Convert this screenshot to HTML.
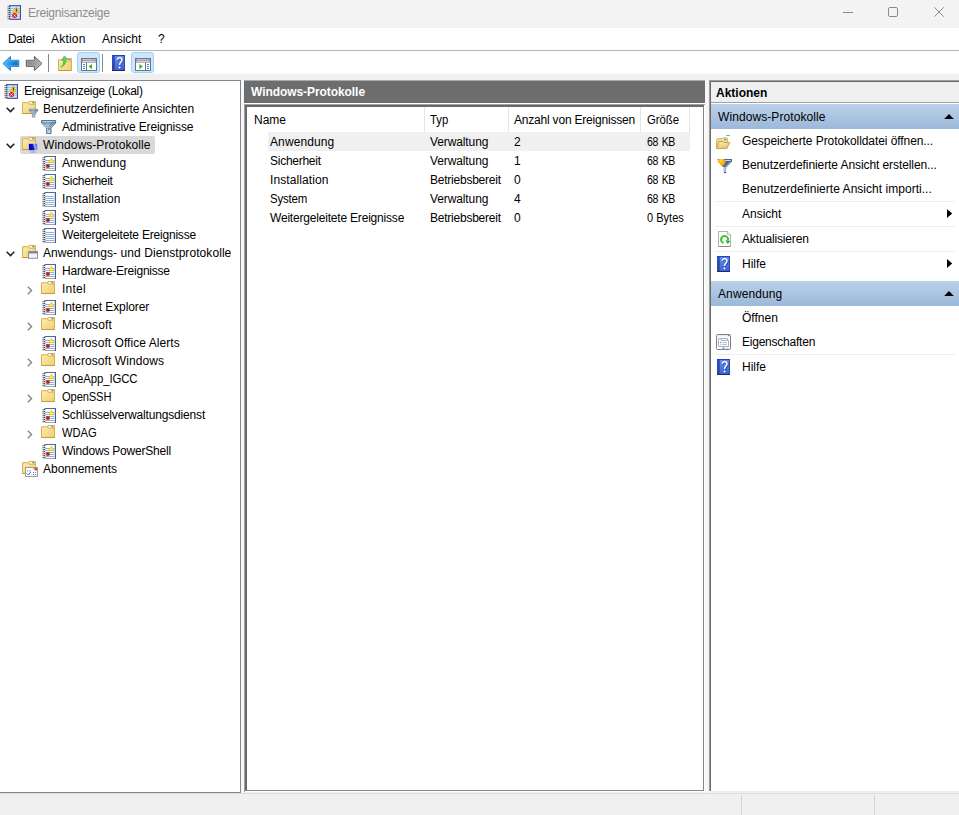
<!DOCTYPE html>
<html><head><meta charset="utf-8"><title>Ereignisanzeige</title>
<style>
*{box-sizing:border-box;margin:0;padding:0}
html,body{width:959px;height:815px;overflow:hidden;background:#f0f0f0}
body{font-family:"Liberation Sans",sans-serif;font-size:12px;color:#000;position:relative}
.abs{position:absolute}
svg{overflow:visible}
.t{position:absolute;white-space:nowrap;transform-origin:0 50%}
#title{left:0;top:0;width:959px;height:28px;background:#f3f3f3}
#menu{left:0;top:28px;width:959px;height:22px;background:#fff}
#mline{left:0;top:50px;width:959px;height:1px;background:#b4b4b4}
#tool{left:0;top:51px;width:959px;height:22px;background:#fff}
#tool2{left:0;top:73px;width:959px;height:1px;background:#f8f8f8}
#tree{left:0;top:80px;width:241px;height:713px;background:#fff;border-top:1px solid #828790;border-right:1px solid #828790;border-bottom:1px solid #828790}
#gap1{left:241px;top:80px;width:3px;height:713px;background:#f7f7f7}
#sel{left:20px;top:136px;width:135px;height:18px;background:#d9d9d9;border-radius:2px}
#midhead{left:244px;top:81px;width:461px;height:22px;background:#6d6d6d}
#midtop{left:244px;top:80px;width:461px;height:1px;background:#ababab}
#midw{left:244px;top:103px;width:461px;height:1px;background:#fff}
#midlist{left:244px;top:104px;width:461px;height:688px;background:#fff;border-left:1px solid #a0a0a0;border-top:1px solid #a0a0a0}
#midlist2{left:245px;top:105px;width:459px;height:686px;background:#fff;border-left:2px solid #696969;border-top:2px solid #696969;border-right:1px solid #828790;border-bottom:1px solid #828790}
#gap2{left:705px;top:80px;width:3px;height:713px;background:#f7f7f7}
#rowsel{left:268px;top:132px;width:422px;height:19px;background:#f0f0f0}
#right{left:709px;top:80px;width:250px;height:711px;background:#fff;border-left:1px solid #a0a0a0;border-top:1px solid #a0a0a0}
#right2{left:710px;top:81px;width:249px;height:710px;background:#fff;border-left:1px solid #696969;border-top:1px solid #696969}
#akt{left:711px;top:82px;width:248px;height:21px;background:#f0f0f0;border-bottom:1px solid #a0a0a0}
.bh{left:711px;width:248px;height:25px;background:linear-gradient(#bad1ea,#9cb8d9)}
.sep{left:716px;width:239px;height:1px;background:#ececec}
#rbot{left:709px;top:791px;width:250px;height:1px;background:#fff}
#rbot2{left:711px;top:791px;width:248px;height:1px;background:#ececec}
#status{left:0;top:793px;width:959px;height:22px;background:#f0f0f0;border-top:1px solid #dcdcdc}
.sdiv{top:795px;width:1px;height:20px;background:#d4d4d4}
.colsep{top:107px;width:1px;height:25px;background:#e5e5e5}
</style></head><body>
<div id="title" class="abs"></div>
<div id="menu" class="abs"></div>
<div id="mline" class="abs"></div>
<div id="tool" class="abs"></div><div id="tool2" class="abs"></div>
<div id="tree" class="abs"></div>
<div id="gap1" class="abs"></div>
<div id="sel" class="abs"></div>
<div id="midtop" class="abs"></div><div id="midhead" class="abs"></div>
<div id="midw" class="abs"></div>
<div id="midlist" class="abs"></div>
<div id="midlist2" class="abs"></div>
<div id="gap2" class="abs"></div>
<div id="rowsel" class="abs"></div>
<div class="abs colsep" style="left:424px"></div><div class="abs colsep" style="left:508px"></div><div class="abs colsep" style="left:640px"></div><div class="abs colsep" style="left:689px"></div>
<div id="right" class="abs"></div>
<div id="right2" class="abs"></div>
<div id="rbot" class="abs"></div><div id="rbot2" class="abs"></div>
<div id="akt" class="abs"></div>
<div class="abs bh" style="top:104px"></div>
<div class="abs bh" style="top:281px"></div>
<div class="abs sep" style="top:201px"></div><div class="abs sep" style="top:226px"></div><div class="abs sep" style="top:251px"></div><div class="abs sep" style="top:354px"></div>
<div id="status" class="abs"></div>
<div class="abs sdiv" style="left:741px"></div><div class="abs sdiv" style="left:874px"></div>
<svg class="abs" style="left:2px;top:55px" width="18" height="17" viewBox="0 0 18 17"><defs><linearGradient id="ba" x1="0" y1="0" x2="1" y2="0.35"><stop offset="0" stop-color="#4cc0fb"/><stop offset="0.45" stop-color="#2aa4f2"/><stop offset="1" stop-color="#0868cc"/></linearGradient></defs><path d="M8.5 1.4 L1 8.5 L8.5 15.5 L8.5 11.4 L16.8 11.4 L16.8 5.3 L8.5 5.3 Z" fill="url(#ba)" stroke="#2a80d2" stroke-width="1"/><path d="M7.6 3.8 L2.6 8.5 L7.6 13.2 L7.6 10.7 L15.8 10.7 L15.8 6 L7.6 6 Z" fill="none" stroke="#8fd6ff" stroke-width="0.5" opacity="0.8"/></svg><svg class="abs" style="left:25px;top:55px" width="18" height="17" viewBox="0 0 18 17"><defs><linearGradient id="fa" x1="0" y1="0" x2="1" y2="0.3"><stop offset="0" stop-color="#878787"/><stop offset="0.6" stop-color="#9a9a9a"/><stop offset="1" stop-color="#b4b4b4"/></linearGradient></defs><path d="M9.4 1.4 L17 8.5 L9.4 15.5 L9.4 11.4 L1.3 11.4 L1.3 5.3 L9.4 5.3 Z" fill="url(#fa)" stroke="#5e5e5e" stroke-width="1"/><path d="M10.3 3.8 L15.4 8.5 L10.3 13.2 L10.3 10.7 L2.3 10.7 L2.3 6 L10.3 6 Z" fill="none" stroke="#c4c4c4" stroke-width="0.5" opacity="0.7"/></svg><div class="abs" style="left:48px;top:54px;width:1px;height:18px;background:#8a8a8a"></div><svg class="abs" style="left:58px;top:55px" width="15" height="17" viewBox="0 0 15 17"><defs><linearGradient id="fg" x1="0" y1="0" x2="1" y2="1"><stop offset="0" stop-color="#fdeeb0"/><stop offset="1" stop-color="#f0cf70"/></linearGradient></defs><g transform="translate(0,3)"><path d="M0.5 1.7 L6.3 1.7 L6.9 0.5 L13.5 0.5 L13.5 12.5 L0.5 12.5 Z" fill="url(#fg)" stroke="#d8b052"/><path d="M6.3 1.7 L7.3 3.3 L13.2 3.3" fill="none" stroke="#d9b256" stroke-width="0.9"/><rect x="7.8" y="1" width="2.6" height="1.2" fill="#fff"/><rect x="10.4" y="1" width="1.8" height="1.2" fill="#3b8fe8"/><rect x="0.5" y="12" width="13" height="1" fill="#c49a3c"/></g><path d="M2.6 12.2 C5.2 10.4 6 7.6 5.6 5 L3.6 5.4 L6.4 1 L9.6 4.4 L7.8 4.6 C8.2 8 6.4 11 2.6 12.2 Z" fill="#55dc46" stroke="#2fae2a" stroke-width="0.6"/></svg><div class="abs" style="left:77px;top:52px;width:23px;height:21px;background:#cde6f9;border:1px solid #9ad3fb;border-radius:3px"></div><svg class="abs" style="left:81px;top:58px" width="16" height="13" viewBox="0 0 16 13"><rect x="0.5" y="0.5" width="15" height="12" fill="#fff" stroke="#6f7383"/><rect x="1" y="1" width="14" height="3.7" fill="#8f93a1"/><rect x="1.6" y="1.4" width="9.4" height="0.8" fill="#e4e7ee"/><rect x="11.7" y="1.3" width="1" height="1" fill="#e4e7ee"/><rect x="13.3" y="1.3" width="1" height="1" fill="#e4e7ee"/><rect x="1.6" y="3.1" width="12.8" height="0.8" fill="#e4e7ee"/><rect x="5" y="4.6" width="1" height="8" fill="#6f7383"/><rect x="2.2" y="6" width="1.8" height="1" fill="#2d7fd6"/><rect x="2.2" y="8" width="1.8" height="1" fill="#2d7fd6"/><rect x="2.2" y="10" width="1.8" height="1" fill="#2d7fd6"/><path d="M11 6 L11 11.2 L7.6 8.6 Z" fill="#35b233"/></svg><div class="abs" style="left:102px;top:54px;width:1px;height:18px;background:#8a8a8a"></div><svg class="abs" style="left:112px;top:55px" width="13" height="16" viewBox="0 0 13 16"><defs><linearGradient id="hp" x1="0" y1="0" x2="0.2" y2="1"><stop offset="0" stop-color="#6f90ec"/><stop offset="1" stop-color="#3d64d4"/></linearGradient><linearGradient id="hs" x1="0" y1="0" x2="0" y2="1"><stop offset="0" stop-color="#2450d0"/><stop offset="1" stop-color="#34468c"/></linearGradient></defs><rect x="0" y="0" width="13" height="16" fill="url(#hp)"/><rect x="0" y="0" width="2.8" height="16" fill="url(#hs)"/><rect x="0" y="0" width="13" height="1" fill="#1e40c4"/><rect x="12" y="0" width="1" height="16" fill="#2747bc"/><rect x="0" y="15" width="13" height="1" fill="#1b2a6c"/><path d="M5.3 4.7 C5.3 2.2 10 2.2 10 4.9 C10 6.9 7.6 7.3 7.6 10.1" fill="none" stroke="#2a3c86" stroke-width="1.5" transform="translate(0.7,0.6)"/><circle cx="8.2" cy="13" r="1" fill="#2a3c86"/><path d="M5.3 4.7 C5.3 2.2 10 2.2 10 4.9 C10 6.9 7.6 7.3 7.6 10.1" fill="none" stroke="#fff" stroke-width="1.5"/><circle cx="7.6" cy="12.5" r="1.05" fill="#fff"/></svg><div class="abs" style="left:131px;top:52px;width:23px;height:21px;background:#cde6f9;border:1px solid #9ad3fb;border-radius:3px"></div><svg class="abs" style="left:135px;top:58px" width="16" height="13" viewBox="0 0 16 13"><rect x="0.5" y="0.5" width="15" height="12" fill="#fff" stroke="#6f7383"/><rect x="1" y="1" width="14" height="3.7" fill="#8f93a1"/><rect x="1.6" y="1.4" width="9.4" height="0.8" fill="#e4e7ee"/><rect x="11.7" y="1.3" width="1" height="1" fill="#e4e7ee"/><rect x="13.3" y="1.3" width="1" height="1" fill="#e4e7ee"/><rect x="1.6" y="3.1" width="12.8" height="0.8" fill="#e4e7ee"/><rect x="10" y="4.6" width="1" height="8" fill="#6f7383"/><rect x="12" y="6" width="1.8" height="1" fill="#2d7fd6"/><rect x="12" y="8" width="1.8" height="1" fill="#2d7fd6"/><rect x="12" y="10" width="1.8" height="1" fill="#2d7fd6"/><path d="M4.4 6 L4.4 11.2 L7.8 8.6 Z" fill="#35b233"/></svg><svg class="abs" style="left:7px;top:5px" width="16" height="16" viewBox="0 0 16 16"><rect x="2.5" y="0.5" width="11" height="14" fill="#a9c1e6" stroke="#4d63a8"/><rect x="13" y="0" width="1" height="15" fill="#3f4fa0"/><rect x="2" y="14" width="12" height="1" fill="#4a5fa5"/><rect x="4" y="2" width="8.5" height="1" fill="#d9e5f4"/><rect x="4" y="4" width="8.5" height="1" fill="#d9e5f4"/><rect x="4" y="6" width="8.5" height="1" fill="#d9e5f4"/><rect x="4" y="8" width="8.5" height="1" fill="#d9e5f4"/><rect x="4" y="10" width="8.5" height="1" fill="#d9e5f4"/><rect x="4" y="12" width="8.5" height="1" fill="#d9e5f4"/><rect x="0.2" y="1" width="1.6" height="1" fill="#a6a6a6"/><rect x="1.6" y="1" width="1.7" height="1" fill="#4e4e4e"/><rect x="0.5" y="2" width="2.3" height="1" fill="#cfcfcf"/><rect x="0.2" y="3" width="1.6" height="1" fill="#a6a6a6"/><rect x="1.6" y="3" width="1.7" height="1" fill="#4e4e4e"/><rect x="0.5" y="4" width="2.3" height="1" fill="#cfcfcf"/><rect x="0.2" y="5" width="1.6" height="1" fill="#a6a6a6"/><rect x="1.6" y="5" width="1.7" height="1" fill="#4e4e4e"/><rect x="0.5" y="6" width="2.3" height="1" fill="#cfcfcf"/><rect x="0.2" y="7" width="1.6" height="1" fill="#a6a6a6"/><rect x="1.6" y="7" width="1.7" height="1" fill="#4e4e4e"/><rect x="0.5" y="8" width="2.3" height="1" fill="#cfcfcf"/><rect x="0.2" y="9" width="1.6" height="1" fill="#a6a6a6"/><rect x="1.6" y="9" width="1.7" height="1" fill="#4e4e4e"/><rect x="0.5" y="10" width="2.3" height="1" fill="#cfcfcf"/><rect x="0.2" y="11" width="1.6" height="1" fill="#a6a6a6"/><rect x="1.6" y="11" width="1.7" height="1" fill="#4e4e4e"/><rect x="0.5" y="12" width="2.3" height="1" fill="#cfcfcf"/><rect x="0.2" y="13" width="1.6" height="1" fill="#a6a6a6"/><rect x="1.6" y="13" width="1.7" height="1" fill="#4e4e4e"/><rect x="0.5" y="14" width="2.3" height="1" fill="#cfcfcf"/><path d="M9.3 2.1 L12.2 7.7 L6.4 7.7 Z" fill="#f7d916" stroke="#c9a800" stroke-width="0.6"/><rect x="8.9" y="3.6" width="0.9" height="2.4" fill="#222"/><rect x="8.9" y="6.4" width="0.9" height="0.8" fill="#222"/><circle cx="7.6" cy="10.6" r="2.5" fill="#d4202a"/><path d="M6.6 9.6 L8.6 11.6 M8.6 9.6 L6.6 11.6" stroke="#fff" stroke-width="0.9"/></svg><div class="abs" style="left:843px;top:12px;width:10px;height:1px;background:#8a8a8a"></div><svg class="abs" style="left:888px;top:7px" width="10" height="10" viewBox="0 0 10 10"><rect x="0.5" y="0.5" width="9" height="9" rx="1.4" fill="none" stroke="#8a8a8a"/></svg><svg class="abs" style="left:934px;top:7px" width="10" height="10" viewBox="0 0 10 10"><path d="M0.3 0.3 L9.7 9.7 M9.7 0.3 L0.3 9.7" stroke="#8a8a8a" stroke-width="1"/></svg>
<svg class="abs" style="left:4px;top:84px" width="16" height="16" viewBox="0 0 16 16"><rect x="2.5" y="0.5" width="11" height="14" fill="#a9c1e6" stroke="#4d63a8"/><rect x="13" y="0" width="1" height="15" fill="#3f4fa0"/><rect x="2" y="14" width="12" height="1" fill="#4a5fa5"/><rect x="4" y="2" width="8.5" height="1" fill="#d9e5f4"/><rect x="4" y="4" width="8.5" height="1" fill="#d9e5f4"/><rect x="4" y="6" width="8.5" height="1" fill="#d9e5f4"/><rect x="4" y="8" width="8.5" height="1" fill="#d9e5f4"/><rect x="4" y="10" width="8.5" height="1" fill="#d9e5f4"/><rect x="4" y="12" width="8.5" height="1" fill="#d9e5f4"/><rect x="0.2" y="1" width="1.6" height="1" fill="#a6a6a6"/><rect x="1.6" y="1" width="1.7" height="1" fill="#4e4e4e"/><rect x="0.5" y="2" width="2.3" height="1" fill="#cfcfcf"/><rect x="0.2" y="3" width="1.6" height="1" fill="#a6a6a6"/><rect x="1.6" y="3" width="1.7" height="1" fill="#4e4e4e"/><rect x="0.5" y="4" width="2.3" height="1" fill="#cfcfcf"/><rect x="0.2" y="5" width="1.6" height="1" fill="#a6a6a6"/><rect x="1.6" y="5" width="1.7" height="1" fill="#4e4e4e"/><rect x="0.5" y="6" width="2.3" height="1" fill="#cfcfcf"/><rect x="0.2" y="7" width="1.6" height="1" fill="#a6a6a6"/><rect x="1.6" y="7" width="1.7" height="1" fill="#4e4e4e"/><rect x="0.5" y="8" width="2.3" height="1" fill="#cfcfcf"/><rect x="0.2" y="9" width="1.6" height="1" fill="#a6a6a6"/><rect x="1.6" y="9" width="1.7" height="1" fill="#4e4e4e"/><rect x="0.5" y="10" width="2.3" height="1" fill="#cfcfcf"/><rect x="0.2" y="11" width="1.6" height="1" fill="#a6a6a6"/><rect x="1.6" y="11" width="1.7" height="1" fill="#4e4e4e"/><rect x="0.5" y="12" width="2.3" height="1" fill="#cfcfcf"/><rect x="0.2" y="13" width="1.6" height="1" fill="#a6a6a6"/><rect x="1.6" y="13" width="1.7" height="1" fill="#4e4e4e"/><rect x="0.5" y="14" width="2.3" height="1" fill="#cfcfcf"/><path d="M9.3 2.1 L12.2 7.7 L6.4 7.7 Z" fill="#f7d916" stroke="#c9a800" stroke-width="0.6"/><rect x="8.9" y="3.6" width="0.9" height="2.4" fill="#222"/><rect x="8.9" y="6.4" width="0.9" height="0.8" fill="#222"/><circle cx="7.6" cy="10.6" r="2.5" fill="#d4202a"/><path d="M6.6 9.6 L8.6 11.6 M8.6 9.6 L6.6 11.6" stroke="#fff" stroke-width="0.9"/></svg><svg class="abs" style="left:22px;top:101px" width="17" height="17" viewBox="0 0 17 17"><defs><linearGradient id="fg" x1="0" y1="0" x2="1" y2="1"><stop offset="0" stop-color="#fdeeb0"/><stop offset="1" stop-color="#f0cf70"/></linearGradient></defs><defs><linearGradient id="fu" x1="0" y1="0" x2="1" y2="0"><stop offset="0" stop-color="#7b9cb6"/><stop offset="0.45" stop-color="#a4bdd0"/><stop offset="1" stop-color="#53758f"/></linearGradient></defs><path d="M0.5 1.7 L6.3 1.7 L6.9 0.5 L13.5 0.5 L13.5 12.5 L0.5 12.5 Z" fill="url(#fg)" stroke="#d8b052"/><path d="M6.3 1.7 L7.3 3.3 L13.2 3.3" fill="none" stroke="#d9b256" stroke-width="0.9"/><rect x="7.8" y="1" width="2.6" height="1.2" fill="#fff"/><rect x="10.4" y="1" width="1.8" height="1.2" fill="#3b8fe8"/><rect x="0.5" y="12" width="13" height="1" fill="#c49a3c"/><g transform="translate(7,8) scale(0.6)"><path d="M0.5 0.5 L14.6 0.5 L14.6 3 L10 8 L10 13.6 L5.6 13.6 L5.6 8 L0.5 3 Z" fill="url(#fu)" stroke="#4d6e8a" stroke-width="0.9"/><rect x="1.4" y="1.3" width="12.4" height="0.9" fill="#b9dcf6"/><rect x="0.9" y="2.6" width="13.4" height="0.7" fill="#4f7697" opacity="0.85"/><path d="M1.8 3.6 L5.9 7.8" stroke="#dbe9f4" stroke-width="0.6" fill="none"/><path d="M13.3 3.6 L9.7 7.6" stroke="#eef5fb" stroke-width="0.7" stroke-dasharray="0.9 0.5" fill="none"/><rect x="6.6" y="8.4" width="2.5" height="4.4" fill="#d6e7f4"/><path d="M6.7 8.2 L7.85 11.4 L9 8.2 Z" fill="#5d83a4"/></g></svg><svg class="abs" style="left:6px;top:107px" width="9" height="6" viewBox="0 0 9 6"><path d="M0.7 0.8 L4.5 4.6 L8.3 0.8" fill="none" stroke="#1e1e1e" stroke-width="1.5"/></svg><svg class="abs" style="left:41px;top:120px" width="16" height="16" viewBox="0 0 16 16"><defs><linearGradient id="fu" x1="0" y1="0" x2="1" y2="0"><stop offset="0" stop-color="#7b9cb6"/><stop offset="0.45" stop-color="#a4bdd0"/><stop offset="1" stop-color="#53758f"/></linearGradient></defs><g transform="translate(0,0) scale(1.0)"><path d="M0.5 0.5 L14.6 0.5 L14.6 3 L10 8 L10 13.6 L5.6 13.6 L5.6 8 L0.5 3 Z" fill="url(#fu)" stroke="#4d6e8a" stroke-width="0.9"/><rect x="1.4" y="1.3" width="12.4" height="0.9" fill="#b9dcf6"/><rect x="0.9" y="2.6" width="13.4" height="0.7" fill="#4f7697" opacity="0.85"/><path d="M1.8 3.6 L5.9 7.8" stroke="#dbe9f4" stroke-width="0.6" fill="none"/><path d="M13.3 3.6 L9.7 7.6" stroke="#eef5fb" stroke-width="0.7" stroke-dasharray="0.9 0.5" fill="none"/><rect x="6.6" y="8.4" width="2.5" height="4.4" fill="#d6e7f4"/><path d="M6.7 8.2 L7.85 11.4 L9 8.2 Z" fill="#5d83a4"/></g></svg><svg class="abs" style="left:22px;top:137px" width="17" height="17" viewBox="0 0 17 17"><defs><linearGradient id="fg" x1="0" y1="0" x2="1" y2="1"><stop offset="0" stop-color="#fdeeb0"/><stop offset="1" stop-color="#f0cf70"/></linearGradient></defs><path d="M0.5 1.7 L6.3 1.7 L6.9 0.5 L13.5 0.5 L13.5 12.5 L0.5 12.5 Z" fill="url(#fg)" stroke="#d8b052"/><path d="M6.3 1.7 L7.3 3.3 L13.2 3.3" fill="none" stroke="#d9b256" stroke-width="0.9"/><rect x="7.8" y="1" width="2.6" height="1.2" fill="#fff"/><rect x="10.4" y="1" width="1.8" height="1.2" fill="#3b8fe8"/><rect x="0.5" y="12" width="13" height="1" fill="#c49a3c"/><defs><linearGradient id="mo" x1="0" y1="0.2" x2="1" y2="0"><stop offset="0" stop-color="#0606b8"/><stop offset="0.42" stop-color="#0c14c8"/><stop offset="0.62" stop-color="#9cb6f2"/><stop offset="1" stop-color="#2e56dc"/></linearGradient></defs><rect x="6.5" y="6.5" width="9" height="7" fill="url(#mo)" stroke="#c9c9d2" stroke-width="0.8"/><rect x="8.5" y="14.6" width="5" height="0.9" fill="#8b8b8b"/></svg><svg class="abs" style="left:6px;top:143px" width="9" height="6" viewBox="0 0 9 6"><path d="M0.7 0.8 L4.5 4.6 L8.3 0.8" fill="none" stroke="#1e1e1e" stroke-width="1.5"/></svg><svg class="abs" style="left:42px;top:156px" width="16" height="16" viewBox="0 0 16 16"><rect x="2.6" y="0" width="11.4" height="15" fill="#fff"/><rect x="2.4" y="0" width="11.6" height="1" fill="#5468b0"/><rect x="12" y="1" width="1" height="13" fill="#dcdcdc"/><rect x="13" y="0" width="1" height="15" fill="#4a5aa8"/><rect x="2.4" y="14" width="10.6" height="1" fill="#a3a3a3"/><rect x="3.4" y="4" width="8.6" height="1" fill="#8ab4da"/><rect x="3.4" y="6" width="8.6" height="1" fill="#8ab4da"/><rect x="3.4" y="8" width="8.6" height="1" fill="#8ab4da"/><rect x="3.4" y="10" width="8.6" height="1" fill="#8ab4da"/><rect x="3.4" y="12" width="8.6" height="1" fill="#8ab4da"/><rect x="0.2" y="1" width="1.6" height="1" fill="#a6a6a6"/><rect x="1.6" y="1" width="1.7" height="1" fill="#4e4e4e"/><rect x="0.5" y="2" width="2.3" height="1" fill="#cfcfcf"/><rect x="0.2" y="3" width="1.6" height="1" fill="#a6a6a6"/><rect x="1.6" y="3" width="1.7" height="1" fill="#4e4e4e"/><rect x="0.5" y="4" width="2.3" height="1" fill="#cfcfcf"/><rect x="0.2" y="5" width="1.6" height="1" fill="#a6a6a6"/><rect x="1.6" y="5" width="1.7" height="1" fill="#4e4e4e"/><rect x="0.5" y="6" width="2.3" height="1" fill="#cfcfcf"/><rect x="0.2" y="7" width="1.6" height="1" fill="#a6a6a6"/><rect x="1.6" y="7" width="1.7" height="1" fill="#4e4e4e"/><rect x="0.5" y="8" width="2.3" height="1" fill="#cfcfcf"/><rect x="0.2" y="9" width="1.6" height="1" fill="#a6a6a6"/><rect x="1.6" y="9" width="1.7" height="1" fill="#4e4e4e"/><rect x="0.5" y="10" width="2.3" height="1" fill="#cfcfcf"/><rect x="0.2" y="11" width="1.6" height="1" fill="#a6a6a6"/><rect x="1.6" y="11" width="1.7" height="1" fill="#4e4e4e"/><rect x="0.5" y="12" width="2.3" height="1" fill="#cfcfcf"/><rect x="0.2" y="13" width="1.6" height="1" fill="#a6a6a6"/><rect x="1.6" y="13" width="1.7" height="1" fill="#4e4e4e"/><rect x="0.5" y="14" width="2.3" height="1" fill="#cfcfcf"/><path d="M9.45 1.9 L12.1 6.8 L6.8 6.8 Z" fill="#fff038" stroke="#d6be1e" stroke-width="0.6"/><circle cx="5.9" cy="10" r="2" fill="#c81e1e"/></svg><svg class="abs" style="left:42px;top:174px" width="16" height="16" viewBox="0 0 16 16"><rect x="2.6" y="0" width="11.4" height="15" fill="#fff"/><rect x="2.4" y="0" width="11.6" height="1" fill="#5468b0"/><rect x="12" y="1" width="1" height="13" fill="#dcdcdc"/><rect x="13" y="0" width="1" height="15" fill="#4a5aa8"/><rect x="2.4" y="14" width="10.6" height="1" fill="#a3a3a3"/><rect x="3.4" y="4" width="8.6" height="1" fill="#8ab4da"/><rect x="3.4" y="6" width="8.6" height="1" fill="#8ab4da"/><rect x="3.4" y="8" width="8.6" height="1" fill="#8ab4da"/><rect x="3.4" y="10" width="8.6" height="1" fill="#8ab4da"/><rect x="3.4" y="12" width="8.6" height="1" fill="#8ab4da"/><rect x="0.2" y="1" width="1.6" height="1" fill="#a6a6a6"/><rect x="1.6" y="1" width="1.7" height="1" fill="#4e4e4e"/><rect x="0.5" y="2" width="2.3" height="1" fill="#cfcfcf"/><rect x="0.2" y="3" width="1.6" height="1" fill="#a6a6a6"/><rect x="1.6" y="3" width="1.7" height="1" fill="#4e4e4e"/><rect x="0.5" y="4" width="2.3" height="1" fill="#cfcfcf"/><rect x="0.2" y="5" width="1.6" height="1" fill="#a6a6a6"/><rect x="1.6" y="5" width="1.7" height="1" fill="#4e4e4e"/><rect x="0.5" y="6" width="2.3" height="1" fill="#cfcfcf"/><rect x="0.2" y="7" width="1.6" height="1" fill="#a6a6a6"/><rect x="1.6" y="7" width="1.7" height="1" fill="#4e4e4e"/><rect x="0.5" y="8" width="2.3" height="1" fill="#cfcfcf"/><rect x="0.2" y="9" width="1.6" height="1" fill="#a6a6a6"/><rect x="1.6" y="9" width="1.7" height="1" fill="#4e4e4e"/><rect x="0.5" y="10" width="2.3" height="1" fill="#cfcfcf"/><rect x="0.2" y="11" width="1.6" height="1" fill="#a6a6a6"/><rect x="1.6" y="11" width="1.7" height="1" fill="#4e4e4e"/><rect x="0.5" y="12" width="2.3" height="1" fill="#cfcfcf"/><rect x="0.2" y="13" width="1.6" height="1" fill="#a6a6a6"/><rect x="1.6" y="13" width="1.7" height="1" fill="#4e4e4e"/><rect x="0.5" y="14" width="2.3" height="1" fill="#cfcfcf"/><path d="M9.45 1.9 L12.1 6.8 L6.8 6.8 Z" fill="#fff038" stroke="#d6be1e" stroke-width="0.6"/><circle cx="5.9" cy="10" r="2" fill="#c81e1e"/></svg><svg class="abs" style="left:42px;top:192px" width="16" height="16" viewBox="0 0 16 16"><rect x="2.6" y="0" width="11.4" height="15" fill="#fff"/><rect x="2.4" y="0" width="11.6" height="1" fill="#5468b0"/><rect x="12" y="1" width="1" height="13" fill="#dcdcdc"/><rect x="13" y="0" width="1" height="15" fill="#4a5aa8"/><rect x="2.4" y="14" width="10.6" height="1" fill="#a3a3a3"/><rect x="3.4" y="4" width="8.6" height="1" fill="#8ab4da"/><rect x="3.4" y="6" width="8.6" height="1" fill="#8ab4da"/><rect x="3.4" y="8" width="8.6" height="1" fill="#8ab4da"/><rect x="3.4" y="10" width="8.6" height="1" fill="#8ab4da"/><rect x="3.4" y="12" width="8.6" height="1" fill="#8ab4da"/><rect x="0.2" y="1" width="1.6" height="1" fill="#a6a6a6"/><rect x="1.6" y="1" width="1.7" height="1" fill="#4e4e4e"/><rect x="0.5" y="2" width="2.3" height="1" fill="#cfcfcf"/><rect x="0.2" y="3" width="1.6" height="1" fill="#a6a6a6"/><rect x="1.6" y="3" width="1.7" height="1" fill="#4e4e4e"/><rect x="0.5" y="4" width="2.3" height="1" fill="#cfcfcf"/><rect x="0.2" y="5" width="1.6" height="1" fill="#a6a6a6"/><rect x="1.6" y="5" width="1.7" height="1" fill="#4e4e4e"/><rect x="0.5" y="6" width="2.3" height="1" fill="#cfcfcf"/><rect x="0.2" y="7" width="1.6" height="1" fill="#a6a6a6"/><rect x="1.6" y="7" width="1.7" height="1" fill="#4e4e4e"/><rect x="0.5" y="8" width="2.3" height="1" fill="#cfcfcf"/><rect x="0.2" y="9" width="1.6" height="1" fill="#a6a6a6"/><rect x="1.6" y="9" width="1.7" height="1" fill="#4e4e4e"/><rect x="0.5" y="10" width="2.3" height="1" fill="#cfcfcf"/><rect x="0.2" y="11" width="1.6" height="1" fill="#a6a6a6"/><rect x="1.6" y="11" width="1.7" height="1" fill="#4e4e4e"/><rect x="0.5" y="12" width="2.3" height="1" fill="#cfcfcf"/><rect x="0.2" y="13" width="1.6" height="1" fill="#a6a6a6"/><rect x="1.6" y="13" width="1.7" height="1" fill="#4e4e4e"/><rect x="0.5" y="14" width="2.3" height="1" fill="#cfcfcf"/></svg><svg class="abs" style="left:42px;top:210px" width="16" height="16" viewBox="0 0 16 16"><rect x="2.6" y="0" width="11.4" height="15" fill="#fff"/><rect x="2.4" y="0" width="11.6" height="1" fill="#5468b0"/><rect x="12" y="1" width="1" height="13" fill="#dcdcdc"/><rect x="13" y="0" width="1" height="15" fill="#4a5aa8"/><rect x="2.4" y="14" width="10.6" height="1" fill="#a3a3a3"/><rect x="3.4" y="4" width="8.6" height="1" fill="#8ab4da"/><rect x="3.4" y="6" width="8.6" height="1" fill="#8ab4da"/><rect x="3.4" y="8" width="8.6" height="1" fill="#8ab4da"/><rect x="3.4" y="10" width="8.6" height="1" fill="#8ab4da"/><rect x="3.4" y="12" width="8.6" height="1" fill="#8ab4da"/><rect x="0.2" y="1" width="1.6" height="1" fill="#a6a6a6"/><rect x="1.6" y="1" width="1.7" height="1" fill="#4e4e4e"/><rect x="0.5" y="2" width="2.3" height="1" fill="#cfcfcf"/><rect x="0.2" y="3" width="1.6" height="1" fill="#a6a6a6"/><rect x="1.6" y="3" width="1.7" height="1" fill="#4e4e4e"/><rect x="0.5" y="4" width="2.3" height="1" fill="#cfcfcf"/><rect x="0.2" y="5" width="1.6" height="1" fill="#a6a6a6"/><rect x="1.6" y="5" width="1.7" height="1" fill="#4e4e4e"/><rect x="0.5" y="6" width="2.3" height="1" fill="#cfcfcf"/><rect x="0.2" y="7" width="1.6" height="1" fill="#a6a6a6"/><rect x="1.6" y="7" width="1.7" height="1" fill="#4e4e4e"/><rect x="0.5" y="8" width="2.3" height="1" fill="#cfcfcf"/><rect x="0.2" y="9" width="1.6" height="1" fill="#a6a6a6"/><rect x="1.6" y="9" width="1.7" height="1" fill="#4e4e4e"/><rect x="0.5" y="10" width="2.3" height="1" fill="#cfcfcf"/><rect x="0.2" y="11" width="1.6" height="1" fill="#a6a6a6"/><rect x="1.6" y="11" width="1.7" height="1" fill="#4e4e4e"/><rect x="0.5" y="12" width="2.3" height="1" fill="#cfcfcf"/><rect x="0.2" y="13" width="1.6" height="1" fill="#a6a6a6"/><rect x="1.6" y="13" width="1.7" height="1" fill="#4e4e4e"/><rect x="0.5" y="14" width="2.3" height="1" fill="#cfcfcf"/><path d="M9.45 1.9 L12.1 6.8 L6.8 6.8 Z" fill="#fff038" stroke="#d6be1e" stroke-width="0.6"/><circle cx="5.9" cy="10" r="2" fill="#c81e1e"/></svg><svg class="abs" style="left:42px;top:228px" width="16" height="16" viewBox="0 0 16 16"><rect x="2.6" y="0" width="11.4" height="15" fill="#fff"/><rect x="2.4" y="0" width="11.6" height="1" fill="#5468b0"/><rect x="12" y="1" width="1" height="13" fill="#dcdcdc"/><rect x="13" y="0" width="1" height="15" fill="#4a5aa8"/><rect x="2.4" y="14" width="10.6" height="1" fill="#a3a3a3"/><rect x="3.4" y="4" width="8.6" height="1" fill="#8ab4da"/><rect x="3.4" y="6" width="8.6" height="1" fill="#8ab4da"/><rect x="3.4" y="8" width="8.6" height="1" fill="#8ab4da"/><rect x="3.4" y="10" width="8.6" height="1" fill="#8ab4da"/><rect x="3.4" y="12" width="8.6" height="1" fill="#8ab4da"/><rect x="0.2" y="1" width="1.6" height="1" fill="#a6a6a6"/><rect x="1.6" y="1" width="1.7" height="1" fill="#4e4e4e"/><rect x="0.5" y="2" width="2.3" height="1" fill="#cfcfcf"/><rect x="0.2" y="3" width="1.6" height="1" fill="#a6a6a6"/><rect x="1.6" y="3" width="1.7" height="1" fill="#4e4e4e"/><rect x="0.5" y="4" width="2.3" height="1" fill="#cfcfcf"/><rect x="0.2" y="5" width="1.6" height="1" fill="#a6a6a6"/><rect x="1.6" y="5" width="1.7" height="1" fill="#4e4e4e"/><rect x="0.5" y="6" width="2.3" height="1" fill="#cfcfcf"/><rect x="0.2" y="7" width="1.6" height="1" fill="#a6a6a6"/><rect x="1.6" y="7" width="1.7" height="1" fill="#4e4e4e"/><rect x="0.5" y="8" width="2.3" height="1" fill="#cfcfcf"/><rect x="0.2" y="9" width="1.6" height="1" fill="#a6a6a6"/><rect x="1.6" y="9" width="1.7" height="1" fill="#4e4e4e"/><rect x="0.5" y="10" width="2.3" height="1" fill="#cfcfcf"/><rect x="0.2" y="11" width="1.6" height="1" fill="#a6a6a6"/><rect x="1.6" y="11" width="1.7" height="1" fill="#4e4e4e"/><rect x="0.5" y="12" width="2.3" height="1" fill="#cfcfcf"/><rect x="0.2" y="13" width="1.6" height="1" fill="#a6a6a6"/><rect x="1.6" y="13" width="1.7" height="1" fill="#4e4e4e"/><rect x="0.5" y="14" width="2.3" height="1" fill="#cfcfcf"/></svg><svg class="abs" style="left:22px;top:245px" width="17" height="17" viewBox="0 0 17 17"><defs><linearGradient id="fg" x1="0" y1="0" x2="1" y2="1"><stop offset="0" stop-color="#fdeeb0"/><stop offset="1" stop-color="#f0cf70"/></linearGradient></defs><path d="M0.5 1.7 L6.3 1.7 L6.9 0.5 L13.5 0.5 L13.5 12.5 L0.5 12.5 Z" fill="url(#fg)" stroke="#d8b052"/><path d="M6.3 1.7 L7.3 3.3 L13.2 3.3" fill="none" stroke="#d9b256" stroke-width="0.9"/><rect x="7.8" y="1" width="2.6" height="1.2" fill="#fff"/><rect x="10.4" y="1" width="1.8" height="1.2" fill="#3b8fe8"/><rect x="0.5" y="12" width="13" height="1" fill="#c49a3c"/><rect x="6.5" y="6.5" width="9" height="6.8" fill="#f4f4f6" stroke="#8a8fa3"/><rect x="7" y="7" width="8" height="1.4" fill="#7e8394"/></svg><svg class="abs" style="left:6px;top:251px" width="9" height="6" viewBox="0 0 9 6"><path d="M0.7 0.8 L4.5 4.6 L8.3 0.8" fill="none" stroke="#1e1e1e" stroke-width="1.5"/></svg><svg class="abs" style="left:42px;top:264px" width="16" height="16" viewBox="0 0 16 16"><rect x="2.6" y="0" width="11.4" height="15" fill="#fff"/><rect x="2.4" y="0" width="11.6" height="1" fill="#5468b0"/><rect x="12" y="1" width="1" height="13" fill="#dcdcdc"/><rect x="13" y="0" width="1" height="15" fill="#4a5aa8"/><rect x="2.4" y="14" width="10.6" height="1" fill="#a3a3a3"/><rect x="3.4" y="4" width="8.6" height="1" fill="#8ab4da"/><rect x="3.4" y="6" width="8.6" height="1" fill="#8ab4da"/><rect x="3.4" y="8" width="8.6" height="1" fill="#8ab4da"/><rect x="3.4" y="10" width="8.6" height="1" fill="#8ab4da"/><rect x="3.4" y="12" width="8.6" height="1" fill="#8ab4da"/><rect x="0.2" y="1" width="1.6" height="1" fill="#a6a6a6"/><rect x="1.6" y="1" width="1.7" height="1" fill="#4e4e4e"/><rect x="0.5" y="2" width="2.3" height="1" fill="#cfcfcf"/><rect x="0.2" y="3" width="1.6" height="1" fill="#a6a6a6"/><rect x="1.6" y="3" width="1.7" height="1" fill="#4e4e4e"/><rect x="0.5" y="4" width="2.3" height="1" fill="#cfcfcf"/><rect x="0.2" y="5" width="1.6" height="1" fill="#a6a6a6"/><rect x="1.6" y="5" width="1.7" height="1" fill="#4e4e4e"/><rect x="0.5" y="6" width="2.3" height="1" fill="#cfcfcf"/><rect x="0.2" y="7" width="1.6" height="1" fill="#a6a6a6"/><rect x="1.6" y="7" width="1.7" height="1" fill="#4e4e4e"/><rect x="0.5" y="8" width="2.3" height="1" fill="#cfcfcf"/><rect x="0.2" y="9" width="1.6" height="1" fill="#a6a6a6"/><rect x="1.6" y="9" width="1.7" height="1" fill="#4e4e4e"/><rect x="0.5" y="10" width="2.3" height="1" fill="#cfcfcf"/><rect x="0.2" y="11" width="1.6" height="1" fill="#a6a6a6"/><rect x="1.6" y="11" width="1.7" height="1" fill="#4e4e4e"/><rect x="0.5" y="12" width="2.3" height="1" fill="#cfcfcf"/><rect x="0.2" y="13" width="1.6" height="1" fill="#a6a6a6"/><rect x="1.6" y="13" width="1.7" height="1" fill="#4e4e4e"/><rect x="0.5" y="14" width="2.3" height="1" fill="#cfcfcf"/><path d="M9.45 1.9 L12.1 6.8 L6.8 6.8 Z" fill="#fff038" stroke="#d6be1e" stroke-width="0.6"/><circle cx="5.9" cy="10" r="2" fill="#c81e1e"/></svg><svg class="abs" style="left:41px;top:281px" width="16" height="16" viewBox="0 0 16 16"><defs><linearGradient id="fg" x1="0" y1="0" x2="1" y2="1"><stop offset="0" stop-color="#fdeeb0"/><stop offset="1" stop-color="#f0cf70"/></linearGradient></defs><path d="M0.5 1.7 L6.3 1.7 L6.9 0.5 L13.5 0.5 L13.5 12.5 L0.5 12.5 Z" fill="url(#fg)" stroke="#d8b052"/><path d="M6.3 1.7 L7.3 3.3 L13.2 3.3" fill="none" stroke="#d9b256" stroke-width="0.9"/><rect x="7.8" y="1" width="2.6" height="1.2" fill="#fff"/><rect x="10.4" y="1" width="1.8" height="1.2" fill="#3b8fe8"/><rect x="0.5" y="12" width="13" height="1" fill="#c49a3c"/></svg><svg class="abs" style="left:27px;top:286px" width="6" height="9" viewBox="0 0 6 9"><path d="M0.8 0.7 L4.6 4.5 L0.8 8.3" fill="none" stroke="#858585" stroke-width="1.35"/></svg><svg class="abs" style="left:42px;top:300px" width="16" height="16" viewBox="0 0 16 16"><rect x="2.6" y="0" width="11.4" height="15" fill="#fff"/><rect x="2.4" y="0" width="11.6" height="1" fill="#5468b0"/><rect x="12" y="1" width="1" height="13" fill="#dcdcdc"/><rect x="13" y="0" width="1" height="15" fill="#4a5aa8"/><rect x="2.4" y="14" width="10.6" height="1" fill="#a3a3a3"/><rect x="3.4" y="4" width="8.6" height="1" fill="#8ab4da"/><rect x="3.4" y="6" width="8.6" height="1" fill="#8ab4da"/><rect x="3.4" y="8" width="8.6" height="1" fill="#8ab4da"/><rect x="3.4" y="10" width="8.6" height="1" fill="#8ab4da"/><rect x="3.4" y="12" width="8.6" height="1" fill="#8ab4da"/><rect x="0.2" y="1" width="1.6" height="1" fill="#a6a6a6"/><rect x="1.6" y="1" width="1.7" height="1" fill="#4e4e4e"/><rect x="0.5" y="2" width="2.3" height="1" fill="#cfcfcf"/><rect x="0.2" y="3" width="1.6" height="1" fill="#a6a6a6"/><rect x="1.6" y="3" width="1.7" height="1" fill="#4e4e4e"/><rect x="0.5" y="4" width="2.3" height="1" fill="#cfcfcf"/><rect x="0.2" y="5" width="1.6" height="1" fill="#a6a6a6"/><rect x="1.6" y="5" width="1.7" height="1" fill="#4e4e4e"/><rect x="0.5" y="6" width="2.3" height="1" fill="#cfcfcf"/><rect x="0.2" y="7" width="1.6" height="1" fill="#a6a6a6"/><rect x="1.6" y="7" width="1.7" height="1" fill="#4e4e4e"/><rect x="0.5" y="8" width="2.3" height="1" fill="#cfcfcf"/><rect x="0.2" y="9" width="1.6" height="1" fill="#a6a6a6"/><rect x="1.6" y="9" width="1.7" height="1" fill="#4e4e4e"/><rect x="0.5" y="10" width="2.3" height="1" fill="#cfcfcf"/><rect x="0.2" y="11" width="1.6" height="1" fill="#a6a6a6"/><rect x="1.6" y="11" width="1.7" height="1" fill="#4e4e4e"/><rect x="0.5" y="12" width="2.3" height="1" fill="#cfcfcf"/><rect x="0.2" y="13" width="1.6" height="1" fill="#a6a6a6"/><rect x="1.6" y="13" width="1.7" height="1" fill="#4e4e4e"/><rect x="0.5" y="14" width="2.3" height="1" fill="#cfcfcf"/><path d="M9.45 1.9 L12.1 6.8 L6.8 6.8 Z" fill="#fff038" stroke="#d6be1e" stroke-width="0.6"/><circle cx="5.9" cy="10" r="2" fill="#c81e1e"/></svg><svg class="abs" style="left:41px;top:317px" width="16" height="16" viewBox="0 0 16 16"><defs><linearGradient id="fg" x1="0" y1="0" x2="1" y2="1"><stop offset="0" stop-color="#fdeeb0"/><stop offset="1" stop-color="#f0cf70"/></linearGradient></defs><path d="M0.5 1.7 L6.3 1.7 L6.9 0.5 L13.5 0.5 L13.5 12.5 L0.5 12.5 Z" fill="url(#fg)" stroke="#d8b052"/><path d="M6.3 1.7 L7.3 3.3 L13.2 3.3" fill="none" stroke="#d9b256" stroke-width="0.9"/><rect x="7.8" y="1" width="2.6" height="1.2" fill="#fff"/><rect x="10.4" y="1" width="1.8" height="1.2" fill="#3b8fe8"/><rect x="0.5" y="12" width="13" height="1" fill="#c49a3c"/></svg><svg class="abs" style="left:27px;top:322px" width="6" height="9" viewBox="0 0 6 9"><path d="M0.8 0.7 L4.6 4.5 L0.8 8.3" fill="none" stroke="#858585" stroke-width="1.35"/></svg><svg class="abs" style="left:42px;top:336px" width="16" height="16" viewBox="0 0 16 16"><rect x="2.6" y="0" width="11.4" height="15" fill="#fff"/><rect x="2.4" y="0" width="11.6" height="1" fill="#5468b0"/><rect x="12" y="1" width="1" height="13" fill="#dcdcdc"/><rect x="13" y="0" width="1" height="15" fill="#4a5aa8"/><rect x="2.4" y="14" width="10.6" height="1" fill="#a3a3a3"/><rect x="3.4" y="4" width="8.6" height="1" fill="#8ab4da"/><rect x="3.4" y="6" width="8.6" height="1" fill="#8ab4da"/><rect x="3.4" y="8" width="8.6" height="1" fill="#8ab4da"/><rect x="3.4" y="10" width="8.6" height="1" fill="#8ab4da"/><rect x="3.4" y="12" width="8.6" height="1" fill="#8ab4da"/><rect x="0.2" y="1" width="1.6" height="1" fill="#a6a6a6"/><rect x="1.6" y="1" width="1.7" height="1" fill="#4e4e4e"/><rect x="0.5" y="2" width="2.3" height="1" fill="#cfcfcf"/><rect x="0.2" y="3" width="1.6" height="1" fill="#a6a6a6"/><rect x="1.6" y="3" width="1.7" height="1" fill="#4e4e4e"/><rect x="0.5" y="4" width="2.3" height="1" fill="#cfcfcf"/><rect x="0.2" y="5" width="1.6" height="1" fill="#a6a6a6"/><rect x="1.6" y="5" width="1.7" height="1" fill="#4e4e4e"/><rect x="0.5" y="6" width="2.3" height="1" fill="#cfcfcf"/><rect x="0.2" y="7" width="1.6" height="1" fill="#a6a6a6"/><rect x="1.6" y="7" width="1.7" height="1" fill="#4e4e4e"/><rect x="0.5" y="8" width="2.3" height="1" fill="#cfcfcf"/><rect x="0.2" y="9" width="1.6" height="1" fill="#a6a6a6"/><rect x="1.6" y="9" width="1.7" height="1" fill="#4e4e4e"/><rect x="0.5" y="10" width="2.3" height="1" fill="#cfcfcf"/><rect x="0.2" y="11" width="1.6" height="1" fill="#a6a6a6"/><rect x="1.6" y="11" width="1.7" height="1" fill="#4e4e4e"/><rect x="0.5" y="12" width="2.3" height="1" fill="#cfcfcf"/><rect x="0.2" y="13" width="1.6" height="1" fill="#a6a6a6"/><rect x="1.6" y="13" width="1.7" height="1" fill="#4e4e4e"/><rect x="0.5" y="14" width="2.3" height="1" fill="#cfcfcf"/><path d="M9.45 1.9 L12.1 6.8 L6.8 6.8 Z" fill="#fff038" stroke="#d6be1e" stroke-width="0.6"/><circle cx="5.9" cy="10" r="2" fill="#c81e1e"/></svg><svg class="abs" style="left:41px;top:353px" width="16" height="16" viewBox="0 0 16 16"><defs><linearGradient id="fg" x1="0" y1="0" x2="1" y2="1"><stop offset="0" stop-color="#fdeeb0"/><stop offset="1" stop-color="#f0cf70"/></linearGradient></defs><path d="M0.5 1.7 L6.3 1.7 L6.9 0.5 L13.5 0.5 L13.5 12.5 L0.5 12.5 Z" fill="url(#fg)" stroke="#d8b052"/><path d="M6.3 1.7 L7.3 3.3 L13.2 3.3" fill="none" stroke="#d9b256" stroke-width="0.9"/><rect x="7.8" y="1" width="2.6" height="1.2" fill="#fff"/><rect x="10.4" y="1" width="1.8" height="1.2" fill="#3b8fe8"/><rect x="0.5" y="12" width="13" height="1" fill="#c49a3c"/></svg><svg class="abs" style="left:27px;top:358px" width="6" height="9" viewBox="0 0 6 9"><path d="M0.8 0.7 L4.6 4.5 L0.8 8.3" fill="none" stroke="#858585" stroke-width="1.35"/></svg><svg class="abs" style="left:42px;top:372px" width="16" height="16" viewBox="0 0 16 16"><rect x="2.6" y="0" width="11.4" height="15" fill="#fff"/><rect x="2.4" y="0" width="11.6" height="1" fill="#5468b0"/><rect x="12" y="1" width="1" height="13" fill="#dcdcdc"/><rect x="13" y="0" width="1" height="15" fill="#4a5aa8"/><rect x="2.4" y="14" width="10.6" height="1" fill="#a3a3a3"/><rect x="3.4" y="4" width="8.6" height="1" fill="#8ab4da"/><rect x="3.4" y="6" width="8.6" height="1" fill="#8ab4da"/><rect x="3.4" y="8" width="8.6" height="1" fill="#8ab4da"/><rect x="3.4" y="10" width="8.6" height="1" fill="#8ab4da"/><rect x="3.4" y="12" width="8.6" height="1" fill="#8ab4da"/><rect x="0.2" y="1" width="1.6" height="1" fill="#a6a6a6"/><rect x="1.6" y="1" width="1.7" height="1" fill="#4e4e4e"/><rect x="0.5" y="2" width="2.3" height="1" fill="#cfcfcf"/><rect x="0.2" y="3" width="1.6" height="1" fill="#a6a6a6"/><rect x="1.6" y="3" width="1.7" height="1" fill="#4e4e4e"/><rect x="0.5" y="4" width="2.3" height="1" fill="#cfcfcf"/><rect x="0.2" y="5" width="1.6" height="1" fill="#a6a6a6"/><rect x="1.6" y="5" width="1.7" height="1" fill="#4e4e4e"/><rect x="0.5" y="6" width="2.3" height="1" fill="#cfcfcf"/><rect x="0.2" y="7" width="1.6" height="1" fill="#a6a6a6"/><rect x="1.6" y="7" width="1.7" height="1" fill="#4e4e4e"/><rect x="0.5" y="8" width="2.3" height="1" fill="#cfcfcf"/><rect x="0.2" y="9" width="1.6" height="1" fill="#a6a6a6"/><rect x="1.6" y="9" width="1.7" height="1" fill="#4e4e4e"/><rect x="0.5" y="10" width="2.3" height="1" fill="#cfcfcf"/><rect x="0.2" y="11" width="1.6" height="1" fill="#a6a6a6"/><rect x="1.6" y="11" width="1.7" height="1" fill="#4e4e4e"/><rect x="0.5" y="12" width="2.3" height="1" fill="#cfcfcf"/><rect x="0.2" y="13" width="1.6" height="1" fill="#a6a6a6"/><rect x="1.6" y="13" width="1.7" height="1" fill="#4e4e4e"/><rect x="0.5" y="14" width="2.3" height="1" fill="#cfcfcf"/><path d="M9.45 1.9 L12.1 6.8 L6.8 6.8 Z" fill="#fff038" stroke="#d6be1e" stroke-width="0.6"/><circle cx="5.9" cy="10" r="2" fill="#c81e1e"/></svg><svg class="abs" style="left:41px;top:389px" width="16" height="16" viewBox="0 0 16 16"><defs><linearGradient id="fg" x1="0" y1="0" x2="1" y2="1"><stop offset="0" stop-color="#fdeeb0"/><stop offset="1" stop-color="#f0cf70"/></linearGradient></defs><path d="M0.5 1.7 L6.3 1.7 L6.9 0.5 L13.5 0.5 L13.5 12.5 L0.5 12.5 Z" fill="url(#fg)" stroke="#d8b052"/><path d="M6.3 1.7 L7.3 3.3 L13.2 3.3" fill="none" stroke="#d9b256" stroke-width="0.9"/><rect x="7.8" y="1" width="2.6" height="1.2" fill="#fff"/><rect x="10.4" y="1" width="1.8" height="1.2" fill="#3b8fe8"/><rect x="0.5" y="12" width="13" height="1" fill="#c49a3c"/></svg><svg class="abs" style="left:27px;top:394px" width="6" height="9" viewBox="0 0 6 9"><path d="M0.8 0.7 L4.6 4.5 L0.8 8.3" fill="none" stroke="#858585" stroke-width="1.35"/></svg><svg class="abs" style="left:42px;top:408px" width="16" height="16" viewBox="0 0 16 16"><rect x="2.6" y="0" width="11.4" height="15" fill="#fff"/><rect x="2.4" y="0" width="11.6" height="1" fill="#5468b0"/><rect x="12" y="1" width="1" height="13" fill="#dcdcdc"/><rect x="13" y="0" width="1" height="15" fill="#4a5aa8"/><rect x="2.4" y="14" width="10.6" height="1" fill="#a3a3a3"/><rect x="3.4" y="4" width="8.6" height="1" fill="#8ab4da"/><rect x="3.4" y="6" width="8.6" height="1" fill="#8ab4da"/><rect x="3.4" y="8" width="8.6" height="1" fill="#8ab4da"/><rect x="3.4" y="10" width="8.6" height="1" fill="#8ab4da"/><rect x="3.4" y="12" width="8.6" height="1" fill="#8ab4da"/><rect x="0.2" y="1" width="1.6" height="1" fill="#a6a6a6"/><rect x="1.6" y="1" width="1.7" height="1" fill="#4e4e4e"/><rect x="0.5" y="2" width="2.3" height="1" fill="#cfcfcf"/><rect x="0.2" y="3" width="1.6" height="1" fill="#a6a6a6"/><rect x="1.6" y="3" width="1.7" height="1" fill="#4e4e4e"/><rect x="0.5" y="4" width="2.3" height="1" fill="#cfcfcf"/><rect x="0.2" y="5" width="1.6" height="1" fill="#a6a6a6"/><rect x="1.6" y="5" width="1.7" height="1" fill="#4e4e4e"/><rect x="0.5" y="6" width="2.3" height="1" fill="#cfcfcf"/><rect x="0.2" y="7" width="1.6" height="1" fill="#a6a6a6"/><rect x="1.6" y="7" width="1.7" height="1" fill="#4e4e4e"/><rect x="0.5" y="8" width="2.3" height="1" fill="#cfcfcf"/><rect x="0.2" y="9" width="1.6" height="1" fill="#a6a6a6"/><rect x="1.6" y="9" width="1.7" height="1" fill="#4e4e4e"/><rect x="0.5" y="10" width="2.3" height="1" fill="#cfcfcf"/><rect x="0.2" y="11" width="1.6" height="1" fill="#a6a6a6"/><rect x="1.6" y="11" width="1.7" height="1" fill="#4e4e4e"/><rect x="0.5" y="12" width="2.3" height="1" fill="#cfcfcf"/><rect x="0.2" y="13" width="1.6" height="1" fill="#a6a6a6"/><rect x="1.6" y="13" width="1.7" height="1" fill="#4e4e4e"/><rect x="0.5" y="14" width="2.3" height="1" fill="#cfcfcf"/><path d="M9.45 1.9 L12.1 6.8 L6.8 6.8 Z" fill="#fff038" stroke="#d6be1e" stroke-width="0.6"/><circle cx="5.9" cy="10" r="2" fill="#c81e1e"/></svg><svg class="abs" style="left:41px;top:425px" width="16" height="16" viewBox="0 0 16 16"><defs><linearGradient id="fg" x1="0" y1="0" x2="1" y2="1"><stop offset="0" stop-color="#fdeeb0"/><stop offset="1" stop-color="#f0cf70"/></linearGradient></defs><path d="M0.5 1.7 L6.3 1.7 L6.9 0.5 L13.5 0.5 L13.5 12.5 L0.5 12.5 Z" fill="url(#fg)" stroke="#d8b052"/><path d="M6.3 1.7 L7.3 3.3 L13.2 3.3" fill="none" stroke="#d9b256" stroke-width="0.9"/><rect x="7.8" y="1" width="2.6" height="1.2" fill="#fff"/><rect x="10.4" y="1" width="1.8" height="1.2" fill="#3b8fe8"/><rect x="0.5" y="12" width="13" height="1" fill="#c49a3c"/></svg><svg class="abs" style="left:27px;top:430px" width="6" height="9" viewBox="0 0 6 9"><path d="M0.8 0.7 L4.6 4.5 L0.8 8.3" fill="none" stroke="#858585" stroke-width="1.35"/></svg><svg class="abs" style="left:42px;top:444px" width="16" height="16" viewBox="0 0 16 16"><rect x="2.6" y="0" width="11.4" height="15" fill="#fff"/><rect x="2.4" y="0" width="11.6" height="1" fill="#5468b0"/><rect x="12" y="1" width="1" height="13" fill="#dcdcdc"/><rect x="13" y="0" width="1" height="15" fill="#4a5aa8"/><rect x="2.4" y="14" width="10.6" height="1" fill="#a3a3a3"/><rect x="3.4" y="4" width="8.6" height="1" fill="#8ab4da"/><rect x="3.4" y="6" width="8.6" height="1" fill="#8ab4da"/><rect x="3.4" y="8" width="8.6" height="1" fill="#8ab4da"/><rect x="3.4" y="10" width="8.6" height="1" fill="#8ab4da"/><rect x="3.4" y="12" width="8.6" height="1" fill="#8ab4da"/><rect x="0.2" y="1" width="1.6" height="1" fill="#a6a6a6"/><rect x="1.6" y="1" width="1.7" height="1" fill="#4e4e4e"/><rect x="0.5" y="2" width="2.3" height="1" fill="#cfcfcf"/><rect x="0.2" y="3" width="1.6" height="1" fill="#a6a6a6"/><rect x="1.6" y="3" width="1.7" height="1" fill="#4e4e4e"/><rect x="0.5" y="4" width="2.3" height="1" fill="#cfcfcf"/><rect x="0.2" y="5" width="1.6" height="1" fill="#a6a6a6"/><rect x="1.6" y="5" width="1.7" height="1" fill="#4e4e4e"/><rect x="0.5" y="6" width="2.3" height="1" fill="#cfcfcf"/><rect x="0.2" y="7" width="1.6" height="1" fill="#a6a6a6"/><rect x="1.6" y="7" width="1.7" height="1" fill="#4e4e4e"/><rect x="0.5" y="8" width="2.3" height="1" fill="#cfcfcf"/><rect x="0.2" y="9" width="1.6" height="1" fill="#a6a6a6"/><rect x="1.6" y="9" width="1.7" height="1" fill="#4e4e4e"/><rect x="0.5" y="10" width="2.3" height="1" fill="#cfcfcf"/><rect x="0.2" y="11" width="1.6" height="1" fill="#a6a6a6"/><rect x="1.6" y="11" width="1.7" height="1" fill="#4e4e4e"/><rect x="0.5" y="12" width="2.3" height="1" fill="#cfcfcf"/><rect x="0.2" y="13" width="1.6" height="1" fill="#a6a6a6"/><rect x="1.6" y="13" width="1.7" height="1" fill="#4e4e4e"/><rect x="0.5" y="14" width="2.3" height="1" fill="#cfcfcf"/><path d="M9.45 1.9 L12.1 6.8 L6.8 6.8 Z" fill="#fff038" stroke="#d6be1e" stroke-width="0.6"/><circle cx="5.9" cy="10" r="2" fill="#c81e1e"/></svg><svg class="abs" style="left:22px;top:461px" width="17" height="17" viewBox="0 0 17 17"><defs><linearGradient id="fg" x1="0" y1="0" x2="1" y2="1"><stop offset="0" stop-color="#fdeeb0"/><stop offset="1" stop-color="#f0cf70"/></linearGradient></defs><path d="M0.5 1.7 L6.3 1.7 L6.9 0.5 L13.5 0.5 L13.5 12.5 L0.5 12.5 Z" fill="url(#fg)" stroke="#d8b052"/><path d="M6.3 1.7 L7.3 3.3 L13.2 3.3" fill="none" stroke="#d9b256" stroke-width="0.9"/><rect x="7.8" y="1" width="2.6" height="1.2" fill="#fff"/><rect x="10.4" y="1" width="1.8" height="1.2" fill="#3b8fe8"/><rect x="0.5" y="12" width="13" height="1" fill="#c49a3c"/><rect x="3.5" y="6.5" width="12" height="9" fill="#fff" stroke="#9a9aa2"/><path d="M12 7 L15 7 L15 9.4 L12.8 9.4 Z" fill="#ee3d4a"/><path d="M10.6 8.6 L12.2 7" stroke="#f3a0a6" stroke-width="0.8"/><rect x="5" y="9.4" width="1" height="1" fill="#2a7fd0"/><rect x="7" y="9.4" width="2" height="1" fill="#8aa0d8"/><rect x="11" y="11" width="1" height="1" fill="#2a7fd0"/><rect x="13.2" y="11" width="1" height="1" fill="#6a6ac0"/><rect x="11" y="13" width="1" height="1" fill="#2a7fd0"/><rect x="13.2" y="13" width="1" height="1" fill="#6a6ac0"/><path d="M5 12.6 L6.4 14 L8.6 11.2" fill="none" stroke="#1f66c0" stroke-width="1"/><rect x="8.6" y="13" width="1.6" height="0.8" fill="#c8c8d8"/></svg>
<svg class="abs" style="left:716px;top:137px" width="15" height="13" viewBox="0 0 15 13"><defs><linearGradient id="of" x1="0" y1="0" x2="0.3" y2="1"><stop offset="0" stop-color="#fdf1bd"/><stop offset="1" stop-color="#e7c46b"/></linearGradient></defs><path d="M0.6 10.5 L0.6 2.6 L1.5 1.7 L6 1.7 L6.7 0.9 L10.9 0.9 L11.6 1.8 L11.6 6 L2 10.8 Z" fill="#f4dc8c" stroke="#c6a347" stroke-width="0.8"/><rect x="6.8" y="2.1" width="1.6" height="1.1" fill="#fff"/><rect x="8.2" y="2.05" width="1.9" height="1.2" rx="0.5" fill="#3b86e8"/><path d="M0.5 11.6 L2.9 4.6 L7.4 4.6 L8.1 5.5 L13.7 5.5 L10.9 11.6 Z" fill="url(#of)" stroke="#b99636" stroke-width="0.8"/></svg><div class="abs" style="left:726px;top:135px;width:4px;height:1px;background:#4ee048"></div><svg class="abs" style="left:717px;top:159px" width="16" height="15" viewBox="0 0 16 15"><defs><linearGradient id="st" x1="0" y1="0" x2="1" y2="0"><stop offset="0" stop-color="#e4eef7"/><stop offset="1" stop-color="#8aa2bb"/></linearGradient><radialGradient id="sun" cx="0.45" cy="0.35" r="0.6"><stop offset="0" stop-color="#ffe618"/><stop offset="0.55" stop-color="#ffab12"/><stop offset="1" stop-color="#f99a10"/></radialGradient><clipPath id="cl"><path d="M-0.3 0 L10 0 L10 9 L6.6 9 L-0.3 1.6 Z"/></clipPath></defs><path d="M0.3 0 L15 0 L15 2.4 L9.2 8.6 L9.2 9.6 L6 9.6 L6 8 Z" fill="#4e6682"/><rect x="7.4" y="1.1" width="6.4" height="0.9" fill="#cfe3f6"/><path d="M13.4 3 L8 8.6" stroke="#eef4fa" stroke-width="0.9" stroke-dasharray="1 0.5"/><rect x="5.8" y="8" width="3.2" height="5.4" fill="url(#st)"/><rect x="7" y="13" width="2.2" height="1.1" fill="#3c5272"/><polygon clip-path="url(#cl)" points="9.00,3.00 7.68,3.88 8.38,5.30 6.80,5.40 6.70,6.98 5.28,6.28 4.40,7.60 3.52,6.28 2.10,6.98 2.00,5.40 0.42,5.30 1.12,3.88 -0.20,3.00 1.12,2.12 0.42,0.70 2.00,0.60 2.10,-0.98 3.52,-0.28 4.40,-1.60 5.28,-0.28 6.70,-0.98 6.80,0.60 8.38,0.70 7.68,2.12" fill="url(#sun)"/></svg><svg class="abs" style="left:718px;top:231px" width="13" height="16" viewBox="0 0 13 16"><path d="M0.5 0.5 L9.3 0.5 L12.5 3.7 L12.5 15.5 L0.5 15.5 Z" fill="#fdfdfd" stroke="#b2b2b2"/><path d="M9.3 0.5 L9.3 3.7 L12.5 3.7" fill="#fff" stroke="#a8a8a8" stroke-width="0.8"/><rect x="0.5" y="15" width="12" height="1" fill="#8a8a8a"/><path d="M5.6 11.9 A3.5 3.5 0 1 1 10 9.2" fill="none" stroke="#35c22f" stroke-width="2"/><path d="M7.4 8.9 L12.3 10 L9.7 13 Z" fill="#1fb41c"/></svg><svg class="abs" style="left:717px;top:256px" width="13" height="16" viewBox="0 0 13 16"><defs><linearGradient id="hp" x1="0" y1="0" x2="0.2" y2="1"><stop offset="0" stop-color="#6f90ec"/><stop offset="1" stop-color="#3d64d4"/></linearGradient><linearGradient id="hs" x1="0" y1="0" x2="0" y2="1"><stop offset="0" stop-color="#2450d0"/><stop offset="1" stop-color="#34468c"/></linearGradient></defs><rect x="0" y="0" width="13" height="16" fill="url(#hp)"/><rect x="0" y="0" width="2.8" height="16" fill="url(#hs)"/><rect x="0" y="0" width="13" height="1" fill="#1e40c4"/><rect x="12" y="0" width="1" height="16" fill="#2747bc"/><rect x="0" y="15" width="13" height="1" fill="#1b2a6c"/><path d="M5.3 4.7 C5.3 2.2 10 2.2 10 4.9 C10 6.9 7.6 7.3 7.6 10.1" fill="none" stroke="#2a3c86" stroke-width="1.5" transform="translate(0.7,0.6)"/><circle cx="8.2" cy="13" r="1" fill="#2a3c86"/><path d="M5.3 4.7 C5.3 2.2 10 2.2 10 4.9 C10 6.9 7.6 7.3 7.6 10.1" fill="none" stroke="#fff" stroke-width="1.5"/><circle cx="7.6" cy="12.5" r="1.05" fill="#fff"/></svg><svg class="abs" style="left:716px;top:334px" width="15" height="16" viewBox="0 0 15 16"><rect x="0.5" y="0.5" width="14" height="15" rx="1.2" fill="#fff" stroke="#7b8087"/><rect x="1.2" y="1.4" width="11" height="1" fill="#dde2e6"/><rect x="12" y="1" width="1.2" height="1.2" fill="#4a6fb0"/><path d="M5.2 4.5 L11.5 4.5 L11.5 6.5" fill="#f1f2f8" stroke="#a3a7bd" stroke-width="0.9"/><rect x="6.2" y="5.1" width="1.9" height="0.9" fill="#fff"/><rect x="9" y="5.1" width="1.9" height="0.9" fill="#fff"/><path d="M2.5 4.5 L5.2 4.5 L5.2 6.5 L12.5 6.5 L12.5 12.5 L2.5 12.5 Z" fill="#fff" stroke="#a3a7bd" stroke-width="0.9"/><circle cx="4.5" cy="8.6" r="0.75" fill="#18b4ff"/><rect x="6.2" y="8.2" width="4.6" height="0.9" fill="#a9adb2"/><circle cx="4.5" cy="10.6" r="0.5" fill="#9a9a9a"/><rect x="6.2" y="10.2" width="4.6" height="0.9" fill="#a9adb2"/><rect x="6" y="13.4" width="3" height="1.4" rx="0.5" fill="#28c0ff"/><rect x="10.2" y="13.7" width="2.4" height="0.9" fill="#b8bcc0"/></svg><svg class="abs" style="left:717px;top:359px" width="13" height="16" viewBox="0 0 13 16"><defs><linearGradient id="hp" x1="0" y1="0" x2="0.2" y2="1"><stop offset="0" stop-color="#6f90ec"/><stop offset="1" stop-color="#3d64d4"/></linearGradient><linearGradient id="hs" x1="0" y1="0" x2="0" y2="1"><stop offset="0" stop-color="#2450d0"/><stop offset="1" stop-color="#34468c"/></linearGradient></defs><rect x="0" y="0" width="13" height="16" fill="url(#hp)"/><rect x="0" y="0" width="2.8" height="16" fill="url(#hs)"/><rect x="0" y="0" width="13" height="1" fill="#1e40c4"/><rect x="12" y="0" width="1" height="16" fill="#2747bc"/><rect x="0" y="15" width="13" height="1" fill="#1b2a6c"/><path d="M5.3 4.7 C5.3 2.2 10 2.2 10 4.9 C10 6.9 7.6 7.3 7.6 10.1" fill="none" stroke="#2a3c86" stroke-width="1.5" transform="translate(0.7,0.6)"/><circle cx="8.2" cy="13" r="1" fill="#2a3c86"/><path d="M5.3 4.7 C5.3 2.2 10 2.2 10 4.9 C10 6.9 7.6 7.3 7.6 10.1" fill="none" stroke="#fff" stroke-width="1.5"/><circle cx="7.6" cy="12.5" r="1.05" fill="#fff"/></svg><svg class="abs" style="left:944px;top:114px" width="10" height="5" viewBox="0 0 9 5"><path d="M4.5 0 L9.3 5 L-0.3 5 Z" fill="#000"/></svg><svg class="abs" style="left:944px;top:291px" width="10" height="5" viewBox="0 0 9 5"><path d="M4.5 0 L9.3 5 L-0.3 5 Z" fill="#000"/></svg><svg class="abs" style="left:947px;top:209px" width="6" height="9" viewBox="0 0 6 9"><path d="M0 0 L5.2 4.5 L0 9 Z" fill="#000"/></svg><svg class="abs" style="left:947px;top:259px" width="6" height="9" viewBox="0 0 6 9"><path d="M0 0 L5.2 4.5 L0 9 Z" fill="#000"/></svg>
<div id="t0" class="t" style="left:28px;top:4px;line-height:18px;height:18px;letter-spacing:-0.245px;color:#8c8c8c;opacity:0.999">Ereignisanzeige</div><div id="t1" class="t" style="left:8px;top:30px;line-height:18px;height:18px;letter-spacing:-0.360px;">Datei</div><div id="t2" class="t" style="left:51px;top:30px;line-height:18px;height:18px;letter-spacing:0.198px;">Aktion</div><div id="t3" class="t" style="left:102px;top:30px;line-height:18px;height:18px;letter-spacing:0.000px;">Ansicht</div><div id="t4" class="t" style="left:158px;top:30px;line-height:18px;height:18px;letter-spacing:0.000px;">?</div><div id="t5" class="t" style="left:24px;top:82px;line-height:18px;height:18px;letter-spacing:-0.295px;">Ereignisanzeige (Lokal)</div><div id="t6" class="t" style="left:43px;top:100px;line-height:18px;height:18px;letter-spacing:-0.060px;">Benutzerdefinierte Ansichten</div><div id="t7" class="t" style="left:62px;top:118px;line-height:18px;height:18px;letter-spacing:-0.135px;">Administrative Ereignisse</div><div id="t8" class="t" style="left:43px;top:136px;line-height:18px;height:18px;letter-spacing:0.085px;">Windows-Protokolle</div><div id="t9" class="t" style="left:62px;top:154px;line-height:18px;height:18px;letter-spacing:0.090px;">Anwendung</div><div id="t10" class="t" style="left:62px;top:172px;line-height:18px;height:18px;letter-spacing:-0.270px;">Sicherheit</div><div id="t11" class="t" style="left:62px;top:190px;line-height:18px;height:18px;letter-spacing:0.090px;">Installation</div><div id="t12" class="t" style="left:62px;top:208px;line-height:18px;height:18px;letter-spacing:-0.180px;;transform:scaleX(0.955)">System</div><div id="t13" class="t" style="left:62px;top:226px;line-height:18px;height:18px;letter-spacing:-0.202px;">Weitergeleitete Ereignisse</div><div id="t14" class="t" style="left:43px;top:244px;line-height:18px;height:18px;letter-spacing:0.070px;">Anwendungs- und Dienstprotokolle</div><div id="t15" class="t" style="left:62px;top:262px;line-height:18px;height:18px;letter-spacing:-0.225px;">Hardware-Ereignisse</div><div id="t16" class="t" style="left:62px;top:280px;line-height:18px;height:18px;letter-spacing:0.248px;">Intel</div><div id="t17" class="t" style="left:62px;top:298px;line-height:18px;height:18px;letter-spacing:-0.090px;">Internet Explorer</div><div id="t18" class="t" style="left:62px;top:316px;line-height:18px;height:18px;letter-spacing:0.146px;">Microsoft</div><div id="t19" class="t" style="left:62px;top:334px;line-height:18px;height:18px;letter-spacing:0.053px;">Microsoft Office Alerts</div><div id="t20" class="t" style="left:62px;top:352px;line-height:18px;height:18px;letter-spacing:0.084px;">Microsoft Windows</div><div id="t21" class="t" style="left:62px;top:370px;line-height:18px;height:18px;letter-spacing:-0.117px;;transform:scaleX(0.95)">OneApp_IGCC</div><div id="t22" class="t" style="left:62px;top:388px;line-height:18px;height:18px;letter-spacing:-0.135px;;transform:scaleX(0.93)">OpenSSH</div><div id="t23" class="t" style="left:62px;top:406px;line-height:18px;height:18px;letter-spacing:-0.166px;">Schlüsselverwaltungsdienst</div><div id="t24" class="t" style="left:62px;top:424px;line-height:18px;height:18px;letter-spacing:0.000px;;transform:scaleX(0.93)">WDAG</div><div id="t25" class="t" style="left:62px;top:442px;line-height:18px;height:18px;letter-spacing:-0.212px;">Windows PowerShell</div><div id="t26" class="t" style="left:43px;top:460px;line-height:18px;height:18px;letter-spacing:0.000px;">Abonnements</div><div id="t27" class="t" style="left:251px;top:83px;line-height:18px;height:18px;letter-spacing:-0.069px;color:#fff;font-weight:bold">Windows-Protokolle</div><div id="t28" class="t" style="left:254px;top:108px;line-height:24px;height:24px;letter-spacing:0.000px;">Name</div><div id="t29" class="t" style="left:430px;top:108px;line-height:24px;height:24px;letter-spacing:0.000px;;transform:scaleX(0.94)">Typ</div><div id="t30" class="t" style="left:514px;top:108px;line-height:24px;height:24px;letter-spacing:-0.201px;">Anzahl von Ereignissen</div><div id="t31" class="t" style="left:647px;top:108px;line-height:24px;height:24px;letter-spacing:0.000px;;transform:scaleX(0.94)">Größe</div><div id="t32" class="t" style="left:270px;top:133px;line-height:19px;height:19px;letter-spacing:0.101px;">Anwendung</div><div id="t33" class="t" style="left:430px;top:133px;line-height:19px;height:19px;letter-spacing:-0.110px;">Verwaltung</div><div id="t34" class="t" style="left:514px;top:133px;line-height:19px;height:19px;letter-spacing:0.000px;">2</div><div id="t35" class="t" style="left:647px;top:133px;line-height:19px;height:19px;letter-spacing:-0.494px;;transform:scaleX(0.88);word-spacing:1.5px">68 KB</div><div id="t36" class="t" style="left:270px;top:152px;line-height:19px;height:19px;letter-spacing:-0.260px;">Sicherheit</div><div id="t37" class="t" style="left:430px;top:152px;line-height:19px;height:19px;letter-spacing:-0.110px;">Verwaltung</div><div id="t38" class="t" style="left:514px;top:152px;line-height:19px;height:19px;letter-spacing:0.000px;">1</div><div id="t39" class="t" style="left:647px;top:152px;line-height:19px;height:19px;letter-spacing:-0.494px;;transform:scaleX(0.88);word-spacing:1.5px">68 KB</div><div id="t40" class="t" style="left:270px;top:171px;line-height:19px;height:19px;letter-spacing:0.090px;">Installation</div><div id="t41" class="t" style="left:430px;top:171px;line-height:19px;height:19px;letter-spacing:-0.235px;">Betriebsbereit</div><div id="t42" class="t" style="left:514px;top:171px;line-height:19px;height:19px;letter-spacing:0.000px;">0</div><div id="t43" class="t" style="left:647px;top:171px;line-height:19px;height:19px;letter-spacing:-0.494px;;transform:scaleX(0.88);word-spacing:1.5px">68 KB</div><div id="t44" class="t" style="left:270px;top:190px;line-height:19px;height:19px;letter-spacing:-0.180px;;transform:scaleX(0.955)">System</div><div id="t45" class="t" style="left:430px;top:190px;line-height:19px;height:19px;letter-spacing:-0.110px;">Verwaltung</div><div id="t46" class="t" style="left:514px;top:190px;line-height:19px;height:19px;letter-spacing:0.000px;">4</div><div id="t47" class="t" style="left:647px;top:190px;line-height:19px;height:19px;letter-spacing:-0.494px;;transform:scaleX(0.88);word-spacing:1.5px">68 KB</div><div id="t48" class="t" style="left:270px;top:209px;line-height:19px;height:19px;letter-spacing:-0.194px;">Weitergeleitete Ereignisse</div><div id="t49" class="t" style="left:430px;top:209px;line-height:19px;height:19px;letter-spacing:-0.235px;">Betriebsbereit</div><div id="t50" class="t" style="left:514px;top:209px;line-height:19px;height:19px;letter-spacing:0.000px;">0</div><div id="t51" class="t" style="left:647px;top:209px;line-height:19px;height:19px;letter-spacing:0.000px;;transform:scaleX(0.92)">0 Bytes</div><div id="t52" class="t" style="left:716px;top:84px;line-height:18px;height:18px;letter-spacing:0.000px;font-weight:bold">Aktionen</div><div id="t53" class="t" style="left:718px;top:108px;line-height:18px;height:18px;letter-spacing:0.079px;">Windows-Protokolle</div><div id="t54" class="t" style="left:742px;top:132px;line-height:18px;height:18px;letter-spacing:-0.075px;">Gespeicherte Protokolldatei öffnen...</div><div id="t55" class="t" style="left:742px;top:156px;line-height:18px;height:18px;letter-spacing:-0.083px;">Benutzerdefinierte Ansicht erstellen...</div><div id="t56" class="t" style="left:742px;top:180px;line-height:18px;height:18px;letter-spacing:0.028px;">Benutzerdefinierte Ansicht importi...</div><div id="t57" class="t" style="left:742px;top:205px;line-height:18px;height:18px;letter-spacing:0.000px;">Ansicht</div><div id="t58" class="t" style="left:742px;top:230px;line-height:18px;height:18px;letter-spacing:-0.150px;">Aktualisieren</div><div id="t59" class="t" style="left:742px;top:255px;line-height:18px;height:18px;letter-spacing:0.000px;">Hilfe</div><div id="t60" class="t" style="left:718px;top:285px;line-height:18px;height:18px;letter-spacing:0.112px;">Anwendung</div><div id="t61" class="t" style="left:742px;top:309px;line-height:18px;height:18px;letter-spacing:0.000px;">Öffnen</div><div id="t62" class="t" style="left:742px;top:333px;line-height:18px;height:18px;letter-spacing:-0.225px;">Eigenschaften</div><div id="t63" class="t" style="left:742px;top:358px;line-height:18px;height:18px;letter-spacing:0.000px;">Hilfe</div>
</body></html>
